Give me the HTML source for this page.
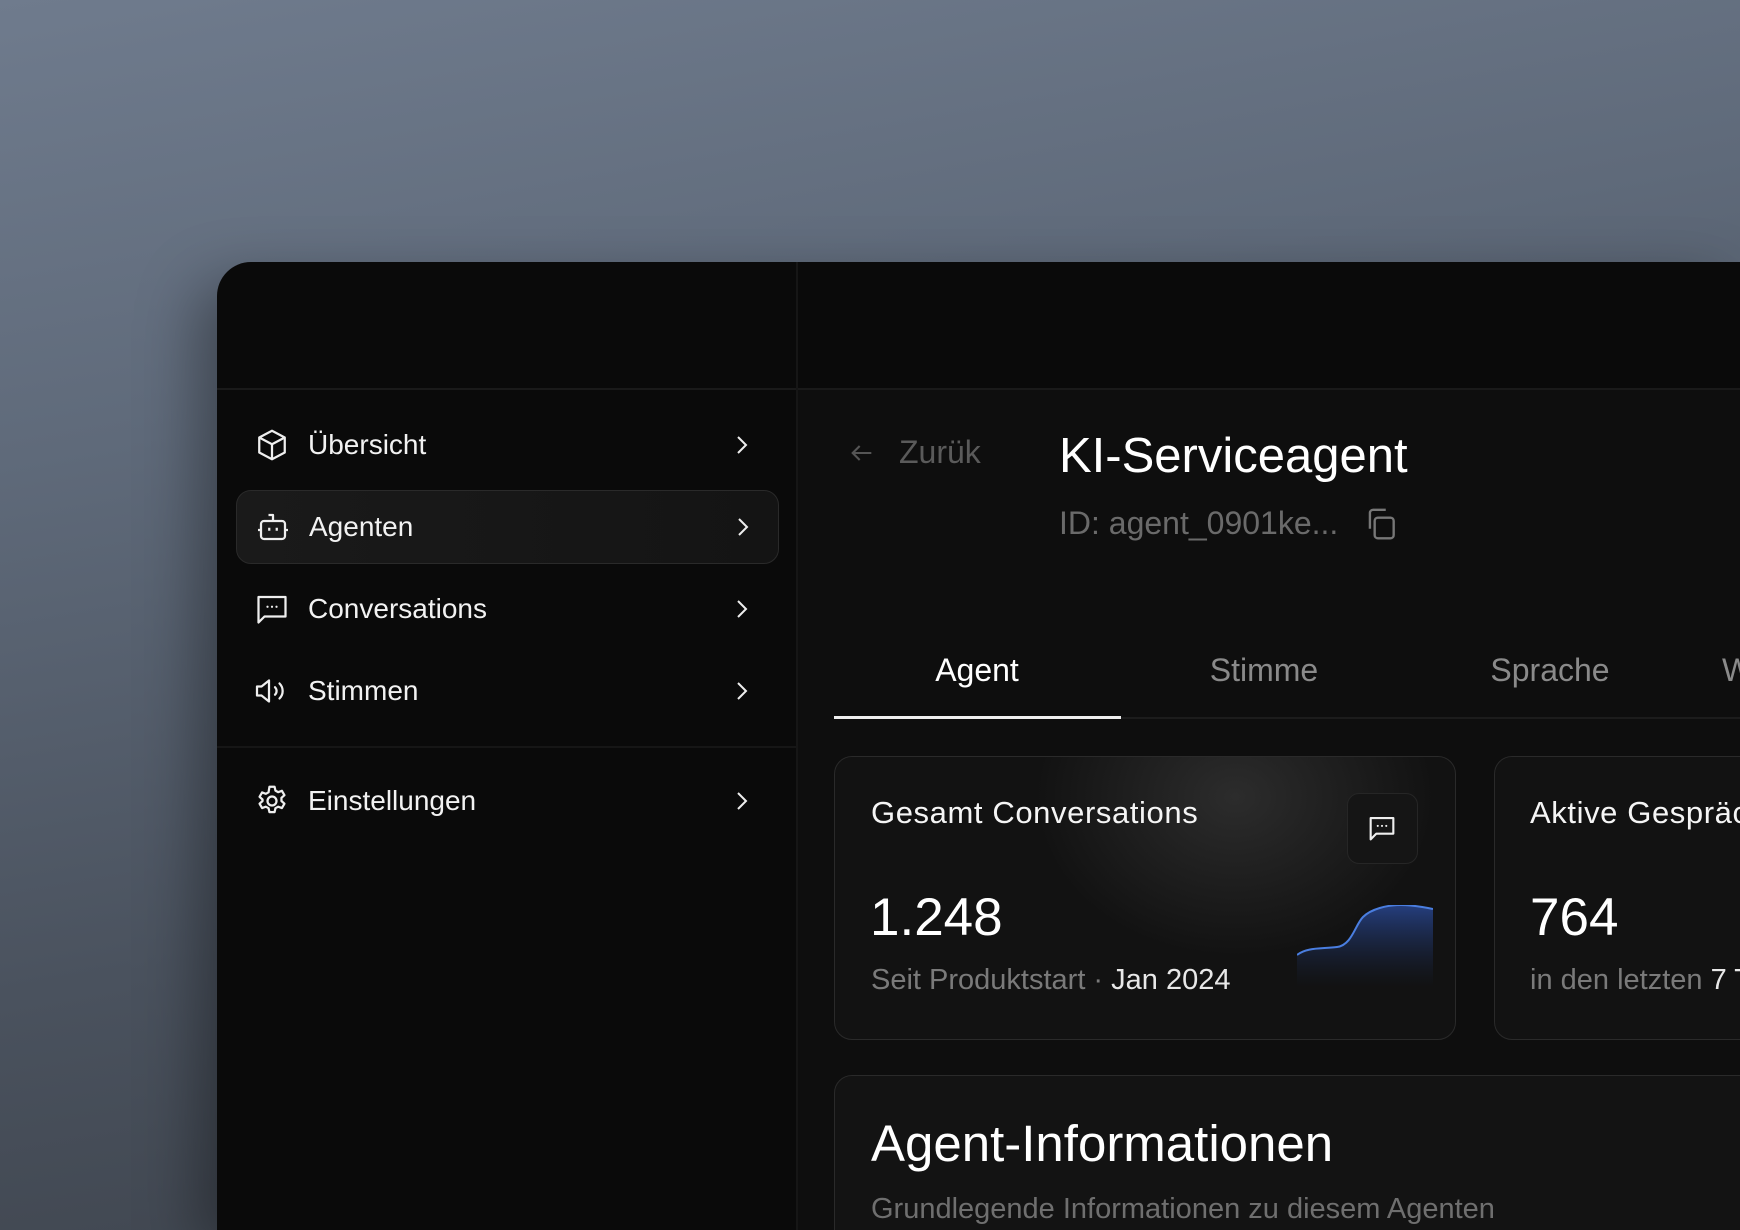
<!DOCTYPE html>
<html><head><meta charset="utf-8"><style>
*{margin:0;padding:0;box-sizing:border-box}
html,body{width:1740px;height:1230px;overflow:hidden}
body{background:linear-gradient(170deg,#6f7b8d 0%,#5f6a7a 30%,#4a525e 65%,#3a3f47 100%);font-family:"Liberation Sans",sans-serif;position:relative}
.win{position:absolute;left:217px;top:262px;width:1523px;height:968px;background:#0a0a0a;border-radius:34px 0 0 0;overflow:hidden;box-shadow:-20px 20px 60px rgba(0,0,0,.35)}
.hline{position:absolute;left:0;right:0;top:126px;height:2px;background:#1a1a1a}
.vline{position:absolute;left:579px;top:0;bottom:0;width:2px;background:#161616}
.main{position:absolute;left:581px;top:128px;right:0;bottom:0;background:#0e0e0e}
.nav{position:absolute;left:19px;width:543px;height:74px;display:flex;align-items:center;color:#f2f2f2;font-size:28px}
.nav.active{background:linear-gradient(90deg,#1a1a1a,#141414);border:1.5px solid #2a2a2a;border-radius:15px}
.nav svg.ic{position:absolute;left:18px;width:36px;height:36px}
.nav span{position:absolute;left:72px}
.nav svg.ch{position:absolute;left:494px;width:24px;height:24px}
.t{position:absolute;white-space:nowrap}
.card{position:absolute;border:1.5px solid #2a2a2a;border-radius:18px;background:#121212}
</style></head><body>
<div class="win">
<div class="hline"></div><div class="vline"></div>
<div class="main"></div>
<div style="position:absolute;left:0;top:484px;width:580px;height:2px;background:#161616"></div>

<div class="nav" style="top:146px"><svg class="ic" viewBox="0 0 24 24" fill="none" stroke="#eee" stroke-width="1.5" stroke-linejoin="round"><path d="M12 2.5l8.5 4.5v10L12 21.5 3.5 17V7z"/><path d="M3.5 7L12 11.5 20.5 7M12 11.5v10"/></svg><span>Übersicht</span><svg class="ch" viewBox="0 0 24 24" fill="none" stroke="#eee" stroke-width="2"><path d="M8 4l8 8-8 8"/></svg></div>
<div class="nav active" style="top:228px"><svg class="ic" viewBox="0 0 24 24" fill="none" stroke="#eee" stroke-width="1.5" stroke-linejoin="round"><rect x="4" y="8" width="16" height="12" rx="2"/><path d="M12 8V4H9M2 14h2M20 14h2M9.5 12.5v2M14.5 12.5v2"/></svg><span>Agenten</span><svg class="ch" viewBox="0 0 24 24" fill="none" stroke="#eee" stroke-width="2"><path d="M8 4l8 8-8 8"/></svg></div>
<div class="nav" style="top:310px"><svg class="ic" viewBox="0 0 24 24" fill="none" stroke="#eee" stroke-width="1.5" stroke-linejoin="round"><path d="M3 4h18v13H7l-4 4z"/><path d="M9 10.5h.01M12 10.5h.01M15 10.5h.01" stroke-linecap="round"/></svg><span>Conversations</span><svg class="ch" viewBox="0 0 24 24" fill="none" stroke="#eee" stroke-width="2"><path d="M8 4l8 8-8 8"/></svg></div>
<div class="nav" style="top:392px"><svg class="ic" viewBox="0 0 24 24" fill="none" stroke="#eee" stroke-width="1.5" stroke-linejoin="round"><path d="M2 9h3l5-4v14l-5-4H2z"/><path d="M14 9.5a3.5 3.5 0 010 5M17 7a7 7 0 010 10" stroke-linecap="round"/></svg><span>Stimmen</span><svg class="ch" viewBox="0 0 24 24" fill="none" stroke="#eee" stroke-width="2"><path d="M8 4l8 8-8 8"/></svg></div>
<div class="nav" style="top:502px"><svg class="ic" viewBox="0 0 24 24" fill="none" stroke="#eee" stroke-width="1.5" stroke-linejoin="round"><circle cx="12" cy="12" r="3"/><path d="M10.3 2.5h3.4l.6 2.6 1.8 1 2.5-.9 1.7 2.9-2 1.8v2.1l2 1.8-1.7 2.9-2.5-.9-1.8 1-.6 2.6h-3.4l-.6-2.6-1.8-1-2.5.9-1.7-2.9 2-1.8V11l-2-1.8L5.4 6.3l2.5.9 1.8-1z"/></svg><span>Einstellungen</span><svg class="ch" viewBox="0 0 24 24" fill="none" stroke="#eee" stroke-width="2"><path d="M8 4l8 8-8 8"/></svg></div>

<svg style="position:absolute;left:631px;top:177px" width="28" height="28" viewBox="0 0 24 24" fill="none" stroke="#555" stroke-width="1.8"><path d="M20 12H4M10 6l-6 6 6 6"/></svg>
<div class="t" style="left:682px;top:172px;font-size:32px;color:#5a5a5a">Zurük</div>
<div class="t" style="left:842px;top:166px;font-size:49px;color:#fff">KI-Serviceagent</div>
<div class="t" style="left:842px;top:243px;font-size:32px;color:#6a6a6a">ID: agent_0901ke...</div>
<svg style="position:absolute;left:1145px;top:243px" width="38" height="38" viewBox="0 0 24 24" fill="none" stroke="#777" stroke-width="1.5"><rect x="8" y="8" width="12" height="13" rx="2"/><path d="M5 15V5a2 2 0 012-2h8"/></svg>

<div class="t" style="left:760px;top:390px;font-size:32px;color:#fff;transform:translateX(-50%)">Agent</div>
<div class="t" style="left:1047px;top:390px;font-size:32px;color:#8a8a8a;transform:translateX(-50%)">Stimme</div>
<div class="t" style="left:1333px;top:390px;font-size:32px;color:#8a8a8a;transform:translateX(-50%)">Sprache</div>
<div class="t" style="left:1505px;top:390px;font-size:32px;color:#8a8a8a">W</div>
<div style="position:absolute;left:617px;right:0;top:455px;height:2px;background:#1c1c1c"></div>
<div style="position:absolute;left:617px;width:287px;top:454px;height:3px;background:#eee"></div>

<div class="card" style="left:617px;top:494px;width:622px;height:284px;background:radial-gradient(ellipse 200px 160px at 400px 40px,#2c2c2c,transparent),#121212">
 <div class="t" style="left:36px;top:38px;font-size:31px;letter-spacing:.6px;color:#f5f5f5">Gesamt Conversations</div>
 <div style="position:absolute;left:512px;top:36px;width:71px;height:71px;border:1.5px solid #262626;border-radius:12px;background:#151515"></div>
 <svg style="position:absolute;left:530px;top:54px" width="34" height="34" viewBox="0 0 24 24" fill="none" stroke="#eee" stroke-width="1.5" stroke-linejoin="round"><path d="M4 5h16v11H8l-4 4z"/><path d="M9 10.5h.01M12 10.5h.01M15 10.5h.01" stroke-linecap="round"/></svg>
 <div class="t" style="left:35px;top:130px;font-size:53px;color:#fff">1.248</div>
 <div class="t" style="left:36px;top:207px;font-size:29px;color:#7a7a7a">Seit Produktstart · <span style="color:#e8e8e8">Jan 2024</span></div>
 <svg style="position:absolute;left:462px;top:148px" width="136" height="82" viewBox="0 0 136 82"><defs><linearGradient id="g" x1="0" y1="0" x2="0" y2="1"><stop offset="0" stop-color="#2a4a9a" stop-opacity=".8"/><stop offset="1" stop-color="#1a2a50" stop-opacity="0"/></linearGradient></defs><path d="M0 50C10 42 25 44 40 42S58 20 66 12 90 0 104 0 136 4 136 4V82H0z" fill="url(#g)"/><path d="M0 50C10 42 25 44 40 42S58 20 66 12 90 0 104 0 136 4 136 4" fill="none" stroke="#4a7ee0" stroke-width="2"/></svg>
</div>
<div class="card" style="left:1277px;top:494px;width:400px;height:284px">
 <div class="t" style="left:35px;top:38px;font-size:31px;letter-spacing:.6px;color:#f5f5f5">Aktive Gespräche</div>
 <div class="t" style="left:35px;top:130px;font-size:53px;color:#fff">764</div>
 <div class="t" style="left:35px;top:207px;font-size:29px;color:#7a7a7a">in den letzten <span style="color:#e8e8e8">7 Tagen</span></div>
</div>
<div class="card" style="left:617px;top:813px;width:1100px;height:400px;background:#131313">
 <div class="t" style="left:36px;top:38px;font-size:51px;color:#fff">Agent-Informationen</div>
 <div class="t" style="left:36px;top:117px;font-size:29px;color:#6f6f6f">Grundlegende Informationen zu diesem Agenten</div>
</div>
</div>
</body></html>
